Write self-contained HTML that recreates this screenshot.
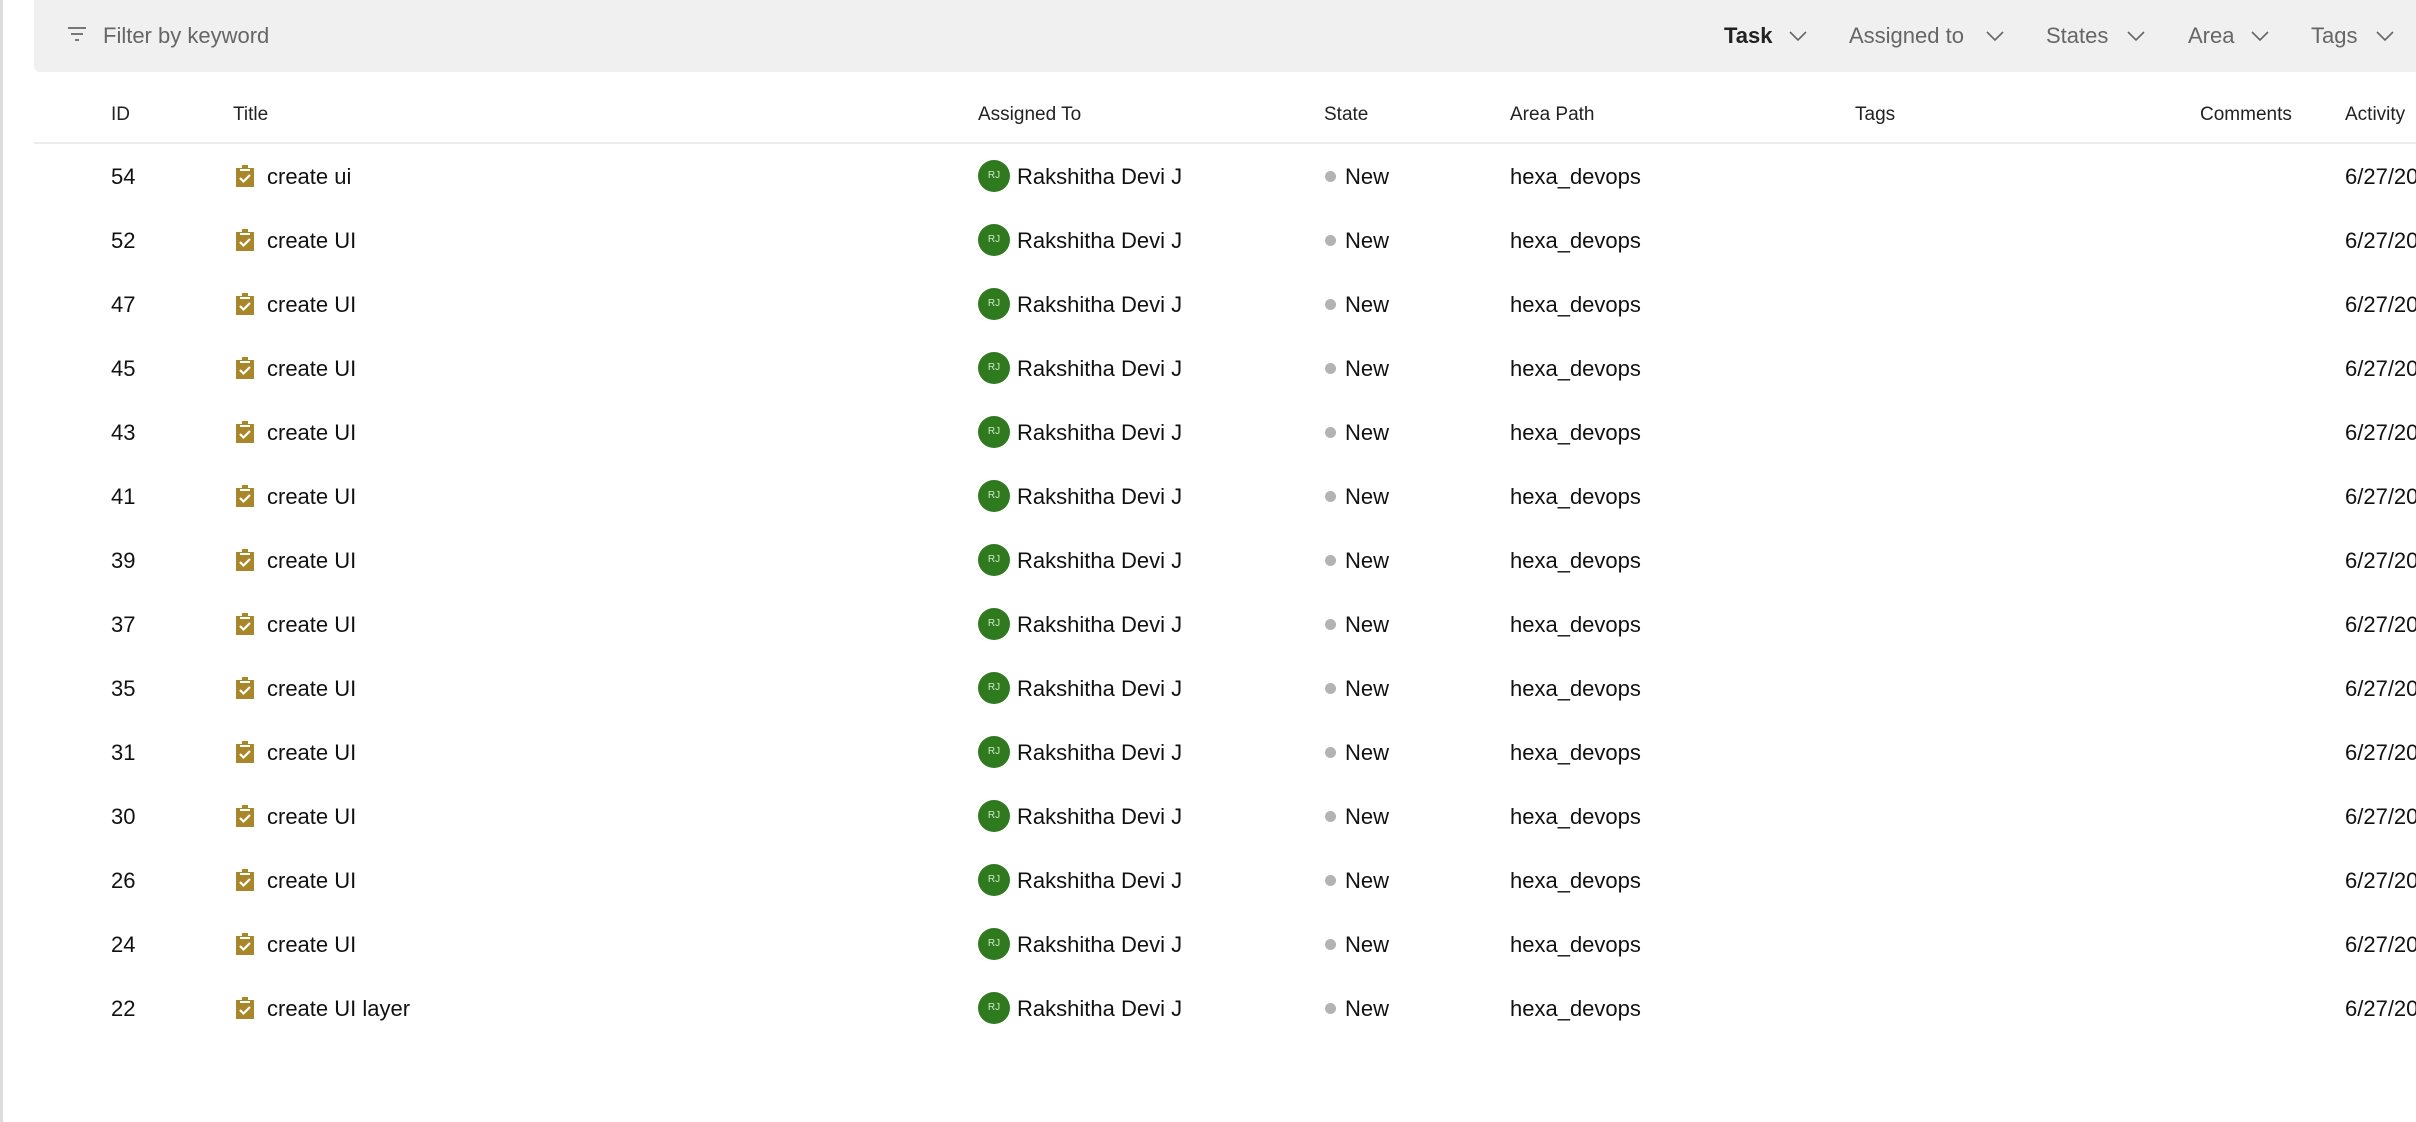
<!DOCTYPE html>
<html><head><meta charset="utf-8"><style>
*{margin:0;padding:0;box-sizing:border-box}
body{width:2416px;height:1122px;background:#fff;position:relative;overflow:hidden;font-family:"Liberation Sans",sans-serif;color:#111}
.lb{position:absolute;left:0;top:0;width:3px;height:1122px;background:#dcdcdc}
.bar{position:absolute;left:34px;top:0;width:2400px;height:72px;background:#f0f0f0;border-bottom-left-radius:6px}
.ab{position:absolute;white-space:nowrap}
.f{font-size:22px;color:#666;top:23px}
.hd{font-size:19px;color:#222;top:104px}
.sep{position:absolute;left:34px;top:142px;width:2400px;height:2px;background:#ececec}
.row{position:absolute;left:0;width:2416px;height:64px;font-size:22px;color:#111}
.row span{position:absolute;top:20px;white-space:nowrap}
.av{position:absolute;left:978px;top:16px;width:32px;height:32px;border-radius:50%;background:#2f7a1f;color:#cfe8c8;font-size:10px;text-align:center;line-height:32px}
.dot{position:absolute;left:1325px;top:27px;width:11px;height:11px;border-radius:50%;background:#b3b3b3}
.ic{position:absolute;left:236px;top:21px}
</style></head><body>
<div class="lb"></div>
<div class="bar"></div>
<svg class="ab" style="left:67px;top:26px" width="20" height="16" viewBox="0 0 20 16"><path d="M1 2h18M4 8h12M8 14h4" stroke="#777" stroke-width="2"/></svg>
<div class="ab f" style="left:103px">Filter by keyword</div>
<div class="ab f" style="left:1724px;color:#222;font-weight:bold">Task</div>
<div class="ab f" style="left:1849px">Assigned to</div>
<div class="ab f" style="left:2046px">States</div>
<div class="ab f" style="left:2188px">Area</div>
<div class="ab f" style="left:2311px">Tags</div>
<svg class="ab" style="left:1789px;top:30px" width="18" height="12"><path d="M1 2l8 8 8-8" fill="none" stroke="#666" stroke-width="1.6"/></svg>
<svg class="ab" style="left:1986px;top:30px" width="18" height="12"><path d="M1 2l8 8 8-8" fill="none" stroke="#666" stroke-width="1.6"/></svg>
<svg class="ab" style="left:2127px;top:30px" width="18" height="12"><path d="M1 2l8 8 8-8" fill="none" stroke="#666" stroke-width="1.6"/></svg>
<svg class="ab" style="left:2251px;top:30px" width="18" height="12"><path d="M1 2l8 8 8-8" fill="none" stroke="#666" stroke-width="1.6"/></svg>
<svg class="ab" style="left:2376px;top:30px" width="18" height="12"><path d="M1 2l8 8 8-8" fill="none" stroke="#666" stroke-width="1.6"/></svg>
<div class="ab hd" style="left:111px">ID</div>
<div class="ab hd" style="left:233px">Title</div>
<div class="ab hd" style="left:978px">Assigned To</div>
<div class="ab hd" style="left:1324px">State</div>
<div class="ab hd" style="left:1510px">Area Path</div>
<div class="ab hd" style="left:1855px">Tags</div>
<div class="ab hd" style="left:2200px">Comments</div>
<div class="ab hd" style="left:2345px">Activity</div>
<div class="sep"></div>
<div id="rows"></div>
<script>
var d=[["54","create ui"],["52","create UI"],["47","create UI"],["45","create UI"],["43","create UI"],["41","create UI"],["39","create UI"],["37","create UI"],["35","create UI"],["31","create UI"],["30","create UI"],["26","create UI"],["24","create UI"],["22","create UI layer"]];
var h="";
d.forEach(function(r,i){
h+='<div class="row" style="top:'+(144+i*64)+'px"><span style="left:111px">'+r[0]+'</span>'+
'<svg class="ic" width="18" height="22" viewBox="0 0 18 22"><rect x="0" y="3" width="18" height="19" fill="#a8872a"/><rect x="6" y="0" width="6" height="5" fill="#a8872a"/><rect x="4" y="4" width="10" height="2" fill="#fff"/><path d="M4 13l3.5 3.5L14 10" fill="none" stroke="#fff" stroke-width="2.2"/></svg>'+
'<span style="left:267px">'+r[1]+'</span><div class="av">RJ</div><span style="left:1017px">Rakshitha Devi J</span><div class="dot"></div><span style="left:1345px">New</span><span style="left:1510px">hexa_devops</span><span style="left:2345px">6/27/2023</span></div>';
});
document.getElementById("rows").innerHTML=h;
</script>
</body></html>
